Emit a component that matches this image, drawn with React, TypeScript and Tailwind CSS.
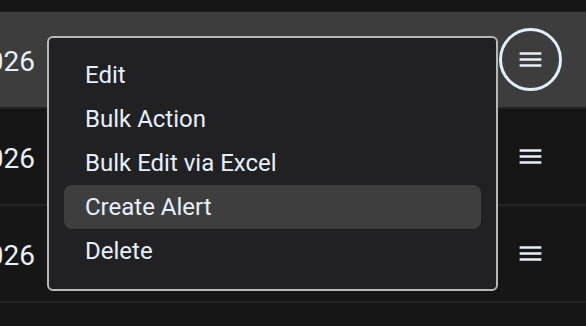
const rows = [
  { id: 1, date: '026', active: true },
  { id: 2, date: '026', active: false },
  { id: 3, date: '026', active: false },
];

const menuItems = ['Edit', 'Bulk Action', 'Bulk Edit via Excel', 'Create Alert', 'Delete'];

function MenuIcon() {
  return (
    <svg width="29" height="29" viewBox="0 0 24 24" fill="currentColor">
      <path d="M3 18h18v-2H3v2zm0-5h18v-2H3v2zm0-7v2h18V6H3z" />
    </svg>
  );
}

export default function App() {
  return (
    <div className="relative w-[586px] h-[326px] overflow-hidden bg-[#161616] text-[#e6f0fc] font-['Roboto',sans-serif]">
      <div className="h-[12px] border-b border-[#242424]" />
      {rows.map((row) => (
        <div
          key={row.id}
          className={`flex items-center justify-between h-[97px] border-b-2 border-[#232323] ${
            row.active ? 'bg-[#3d3d3d]' : 'bg-[#161616]'
          }`}
        >
          <span className="text-[28px] ml-[-28px] mt-[4px] leading-none">2{row.date}</span>
          <div className="w-[64px] h-[64px] mr-[24px] flex items-center justify-center">
            {row.active ? (
              <div className="w-[63px] h-[63px] rounded-full border-[3px] border-[#e3eefc] flex items-center justify-center">
                <MenuIcon />
              </div>
            ) : (
              <MenuIcon />
            )}
          </div>
        </div>
      ))}

      <div className="absolute left-[47px] top-[36px] w-[451px] h-[255px] bg-[#212123] border-2 border-[#b8b8b8] rounded-[6px] p-[15px]">
        <ul className="flex flex-col">
          {menuItems.map((item) => (
            <li
              key={item}
              className={`h-[44px] flex items-center px-[21px] rounded-lg text-[24px] ${
                item === 'Create Alert' ? 'bg-[#3e3e3e]' : ''
              }`}
            >
              {item}
            </li>
          ))}
        </ul>
      </div>
    </div>
  );
}
